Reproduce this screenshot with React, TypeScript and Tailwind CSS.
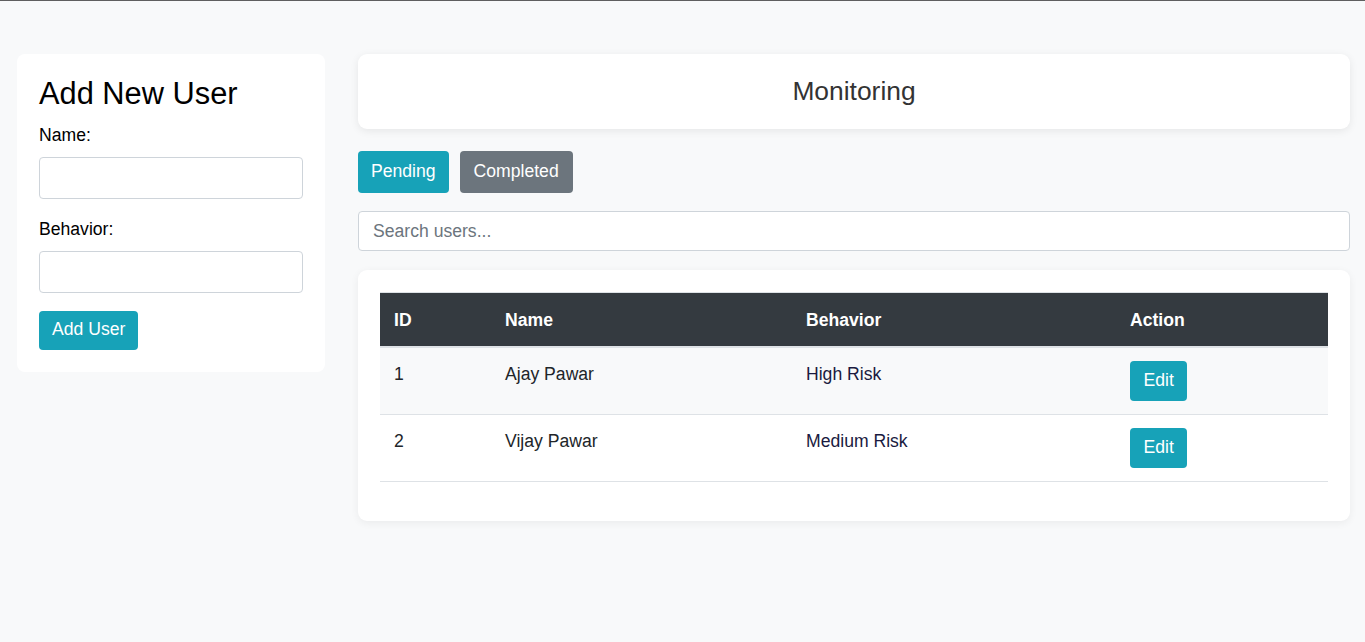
import React, { useState } from 'react';

type User = { id: number; name: string; behavior: string };

const users: User[] = [
  { id: 1, name: 'Ajay Pawar', behavior: 'High Risk' },
  { id: 2, name: 'Vijay Pawar', behavior: 'Medium Risk' },
];

const App: React.FC = () => {
  const [tab, setTab] = useState<'pending' | 'completed'>('pending');
  const [search, setSearch] = useState('');

  const rows = users.filter((u) => u.name.toLowerCase().includes(search.toLowerCase()));

  return (
    <div
      className="min-h-screen bg-[#f8f9fa] border-t border-[#5f5f5f] text-[#212529] text-[17.6px] leading-[1.5]"
      style={{ fontFamily: '"Liberation Sans", Arial, sans-serif' }}
    >
      <div className="flex items-start gap-[33px] pl-[17px] pr-[15px] pt-[53px]">
        {/* add user form */}
        <aside className="w-[308px] shrink-0 bg-white rounded-[8px] p-[22px]">
          <h3 className="text-[30.8px] leading-[1.2] text-black mb-[9px]">Add New User</h3>
          <div className="mb-[17px]">
            <label className="block text-black mb-[8.5px]">Name:</label>
            <input
              type="text"
              className="block w-full h-[42px] px-[13px] bg-white border border-[#ced4da] rounded-[4px] focus:outline-none"
            />
          </div>
          <div className="mb-[18px]">
            <label className="block text-black mb-[8.5px]">Behavior:</label>
            <input
              type="text"
              className="block w-full h-[42px] px-[13px] bg-white border border-[#ced4da] rounded-[4px] focus:outline-none"
            />
          </div>
          <button className="h-[39px] px-[13px] bg-[#17a2b8] text-white rounded-[4px] leading-none">
            Add User
          </button>
        </aside>

        {/* monitoring */}
        <main className="flex-1 min-w-0">
          <div className="h-[75px] bg-white rounded-[9px] shadow-[0_2px_8px_rgba(0,0,0,0.08)] flex items-center justify-center">
            <h2 className="text-[26.4px] text-[#333]">Monitoring</h2>
          </div>

          <div className="flex gap-[11px] mt-[22px]">
            <button
              onClick={() => setTab('pending')}
              className="h-[42px] px-[13px] bg-[#17a2b8] text-white rounded-[4px] leading-none"
            >
              Pending
            </button>
            <button
              onClick={() => setTab('completed')}
              className="h-[42px] px-[14px] bg-[#6c757d] text-white rounded-[4px] leading-none"
            >
              Completed
            </button>
          </div>

          <input
            type="text"
            value={search}
            onChange={(e) => setSearch(e.target.value)}
            placeholder="Search users..."
            className="block w-full h-[40px] mt-[18px] px-[14px] bg-white border border-[#ced4da] rounded-[4px] placeholder:text-[#6c757d] focus:outline-none"
          />

          <div className="mt-[19px] bg-white rounded-[9px] shadow-[0_2px_8px_rgba(0,0,0,0.06)] px-[22px] pt-[22px] pb-[39px]">
            <table className="w-full table-fixed border-collapse">
              <colgroup>
                <col className="w-[111px]" />
                <col className="w-[301px]" />
                <col className="w-[324px]" />
                <col className="w-[212px]" />
              </colgroup>
              <thead>
                <tr className="bg-[#343a40] text-white border-t border-[#dee2e6]">
                  {['ID', 'Name', 'Behavior', 'Action'].map((h) => (
                    <th
                      key={h}
                      className="text-left font-bold px-[14px] py-[13.5px] leading-[26px] border-b-2 border-[#dee2e6]"
                    >
                      {h}
                    </th>
                  ))}
                </tr>
              </thead>
              <tbody>
                {rows.map((u, i) => (
                  <tr
                    key={u.id}
                    className={`border-b border-[#dee2e6] ${i % 2 === 0 ? 'bg-[#f8f9fa]' : 'bg-white'}`}
                  >
                    <td className="align-top px-[14px] py-[13px] leading-[26px]">{u.id}</td>
                    <td className="align-top px-[14px] py-[13px] leading-[26px]">{u.name}</td>
                    <td className="align-top px-[14px] py-[13px] leading-[26px] text-[#1a1a40]">{u.behavior}</td>
                    <td className="align-top px-[14px] py-[13px] leading-[26px]">
                      <button className="block h-[40px] px-[13.5px] bg-[#17a2b8] text-white rounded-[4px] leading-none">
                        Edit
                      </button>
                    </td>
                  </tr>
                ))}
              </tbody>
            </table>
            {tab === 'completed' && null}
          </div>
        </main>
      </div>
    </div>
  );
};

export default App;
